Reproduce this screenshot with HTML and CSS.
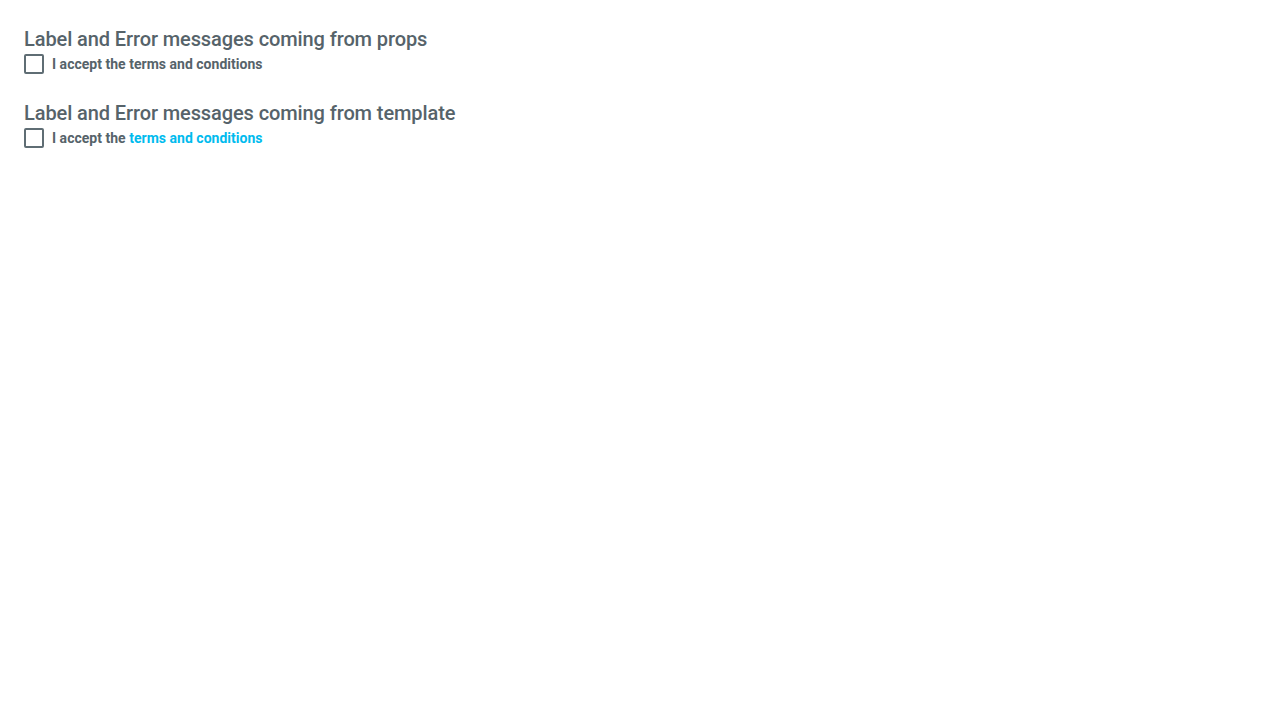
FILE: index.html
```html
<!DOCTYPE html>
<html>
<head>
<meta charset="utf-8">
<link rel="stylesheet" href="styles.css">
</head>
<body>
<div class="page">
  <section class="block">
    <h2 class="title">Label and Error messages coming from props</h2>
    <label class="check">
      <span class="box"></span>
      <span class="text">I accept the terms and conditions</span>
    </label>
  </section>
  <section class="block">
    <h2 class="title">Label and Error messages coming from template</h2>
    <label class="check">
      <span class="box"></span>
      <span class="text">I accept the <a class="link" href="#">terms and conditions</a></span>
    </label>
  </section>
</div>
</body>
</html>
```
FILE: styles.css
```css
html, body {
  margin: 0;
  background: #ffffff;
}
.page {
  padding: 24px;
  display: flex;
  flex-direction: column;
  gap: 24px;
  font-family: Roboto, "Liberation Sans", sans-serif;
  color: #56636a;
}
.block {
  display: flex;
  flex-direction: column;
}
.title {
  margin: 0;
  font-size: 20px;
  line-height: 30px;
  font-weight: 500;
  letter-spacing: -0.1px;
  color: #56636a;
}
.check {
  display: flex;
  align-items: center;
  gap: 8px;
  height: 20px;
}
.box {
  box-sizing: border-box;
  width: 20px;
  height: 20px;
  border: 2px solid #5f6d74;
  border-radius: 2px;
  background: #fff;
}
.text {
  font-size: 14px;
  font-weight: 700;
  line-height: 20px;
  letter-spacing: 0.02px;
}
.link {
  color: #00bbee;
  text-decoration: none;
}
```
